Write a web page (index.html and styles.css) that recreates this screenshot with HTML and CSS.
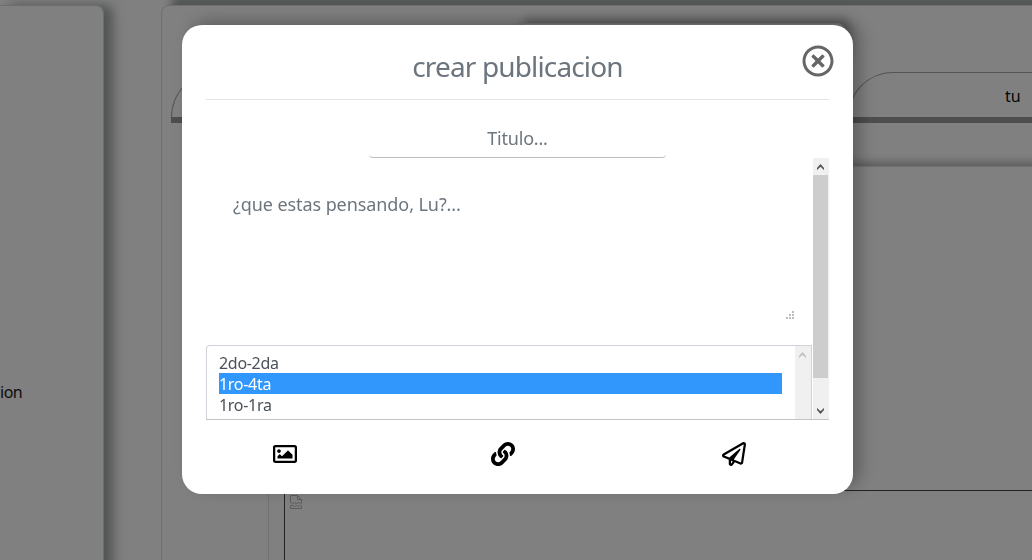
FILE: index.html
```
<!DOCTYPE html>
<html lang="es">
<head>
<meta charset="utf-8">
<title>crear publicacion</title>
<link rel="stylesheet" href="styles.css">
</head>
<body>
<div class="page">
  <aside class="side"><span class="side-label">ion</span></aside>
  <main class="main">
    <div class="banner"></div>
    <nav class="tabs">
      <div class="tab"></div>
      <div class="tab tab-tu">tu</div>
    </nav>
    <section class="post">
      <div class="post-media">
        <svg class="broken" viewBox="0 0 12 14" fill="none" stroke="#5c5c5c"><path d="M.5 7V.5h7l4 4V8M7.500 .5v4h4M.5 7l2 2 2-2 2 2 2-2 2 2 1-1M.5 10.500v3h11V11l-1-1-2 2-2-2-2 2-2-2-2 1"/></svg>
      </div>
    </section>
  </main>
</div>
<div class="overlay">
  <div class="modal" role="dialog">
    <header class="modal-header">
      <h2 class="modal-title">crear publicacion</h2>
      <svg class="close" viewBox="0 0 512 512"><path d="M256 8C119 8 8 119 8 256s111 248 248 248 248-111 248-248S393 8 256 8zm0 448c-110.500 0-200-89.500-200-200S145.500 56 256 56s200 89.500 200 200-89.500 200-200 200zm101.800-262.200L295.600 256l62.200 62.200c4.700 4.700 4.700 12.300 0 17l-22.600 22.600c-4.700 4.700-12.300 4.700-17 0L256 295.600l-62.200 62.200c-4.700 4.700-12.300 4.700-17 0l-22.600-22.600c-4.700-4.700-4.700-12.300 0-17l62.200-62.200-62.200-62.200c-4.700-4.700-4.700-12.300 0-17l22.600-22.600c4.700-4.700 12.300-4.700 17 0l62.200 62.200 62.200-62.200c4.700-4.700 12.300-4.700 17 0l22.600 22.600c4.700 4.700 4.700 12.300 0 17z"/></svg>
    </header>
    <div class="title-field">Titulo...</div>
    <div class="scroll-area">
      <div class="fields">
        <div class="message">
          <span class="message-text">¿que estas pensando, Lu?...</span>
          <svg class="grip" viewBox="0 0 8 8" fill="#bdbdbd" shape-rendering="crispEdges"><path d="M6 0h2v2H6zM3 3h2v2H3zM6 3h2v2H6zM0 6h2v2H0zM3 6h2v2H3zM6 6h2v2H6z"/></svg>
        </div>
        <div class="select">
          <div class="options">
            <div class="option">2do-2da</div>
            <div class="option selected">1ro-4ta</div>
            <div class="option">1ro-1ra</div>
          </div>
          <div class="select-bar"><svg class="arrow faint" viewBox="0 0 7 6"><path d="M0 4L3.500 0 7 4V6L3.500 2.700 0 6z"/></svg></div>
        </div>
      </div>
      <div class="bar">
        <svg class="arrow" viewBox="0 0 7 6"><path d="M0 4L3.500 0 7 4V6L3.500 2.700 0 6z"/></svg>
        <div class="thumb"></div>
        <svg class="arrow down" viewBox="0 0 7 6"><path d="M0 2L3.500 6 7 2V0L3.500 3.300 0 0z"/></svg>
      </div>
    </div>
    <footer class="actions">
      <svg class="icon" viewBox="0 0 512 512"><path d="M464 64H48C21.490 64 0 85.490 0 112v288c0 26.510 21.490 48 48 48h416c26.510 0 48-21.490 48-48V112c0-26.510-21.490-48-48-48zm-6 336H54a6 6 0 0 1-6-6V118a6 6 0 0 1 6-6h404a6 6 0 0 1 6 6v276a6 6 0 0 1-6 6zM128 152c-22.091 0-40 17.909-40 40s17.909 40 40 40 40-17.909 40-40-17.909-40-40-40zM96 352h320v-80l-87.515-87.515c-4.686-4.686-12.284-4.686-16.971 0L192 304l-39.515-39.515c-4.686-4.686-12.284-4.686-16.971 0L96 304v48z"/></svg>
      <svg class="icon icon-link" viewBox="0 0 512 512"><path d="M326.612 185.391c59.747 59.809 58.927 155.698.36 214.590-.11.12-.24.25-.36.37l-67.200 67.200c-59.270 59.270-155.699 59.262-214.960 0-59.270-59.260-59.270-155.700 0-214.960l37.106-37.106c9.840-9.840 26.786-3.300 27.294 10.606.648 17.722 3.826 35.527 9.690 52.721 1.986 5.822.567 12.262-3.783 16.612l-13.087 13.087c-28.026 28.026-28.905 73.660-1.155 101.960 28.024 28.579 74.086 28.749 102.325.51l67.200-67.190c28.191-28.191 28.073-73.757 0-101.830-3.701-3.694-7.429-6.564-10.341-8.569a16.037 16.037 0 0 1-6.947-12.606c-.396-10.567 3.348-21.456 11.698-29.806l21.054-21.055c5.521-5.521 14.182-6.199 20.584-1.731a152.482 152.482 0 0 1 20.522 17.197zM467.547 44.449c-59.261-59.262-155.690-59.270-214.960 0l-67.200 67.200c-.12.12-.25.25-.36.37-58.566 58.892-59.387 154.781.36 214.590a152.454 152.454 0 0 0 20.521 17.196c6.402 4.468 15.064 3.789 20.584-1.731l21.054-21.055c8.350-8.350 12.094-19.239 11.698-29.806a16.037 16.037 0 0 0-6.947-12.606c-2.912-2.005-6.640-4.875-10.341-8.569-28.073-28.073-28.191-73.639 0-101.830l67.200-67.190c28.239-28.239 74.300-28.069 102.325.51 27.750 28.300 26.872 73.934-1.155 101.960l-13.087 13.087c-4.350 4.350-5.769 10.790-3.783 16.612 5.864 17.194 9.042 34.999 9.690 52.721.509 13.906 17.454 20.446 27.294 10.606l37.106-37.106c59.271-59.259 59.271-155.699.001-214.959z"/></svg>
      <svg class="icon" viewBox="0 0 512 512"><path d="M440 6.500L24 246.400c-34.400 19.900-31.100 70.800 5.700 85.900L144 379.600V464c0 46.400 59.200 65.500 86.600 28.600l43.800-59.100 111.900 46.200c5.900 2.400 12.100 3.600 18.300 3.600 8.200 0 16.300-2.100 23.600-6.200 12.800-7.200 21.600-20 23.900-34.500l59.400-387.200c6.100-40.100-36.900-68.800-71.500-48.900zM192 464v-64.600l36.600 15.100L192 464zm212.600-28.700l-153.800-63.500L391 169.500c10.700-15.500-9.500-33.500-23.700-21.200L155.800 332.600 48 288 464 48l-59.400 387.300z"/></svg>
    </footer>
  </div>
</div>
</body>
</html>
```
FILE: styles.css
```
* { box-sizing: border-box; }
body {
  margin: 0;
  background: #808080;
  font-family: "Noto Sans", "Open Sans", sans-serif;
  font-size: 16px;
  overflow: hidden;
}
svg { display: block; flex: none; }

.page {
  display: flex;
  gap: 57px;
  height: 560px;
  padding-top: 5px;
  overflow: hidden;
}
.side {
  flex: none;
  width: 104px;
  height: 640px;
  border: 1px solid #6e6e6e;
  border-left: 0;
  border-radius: 0 8px 0 0;
  background: #808080;
  box-shadow: 9px 0 12px #505452;
  color: #0c0c0c;
  padding-top: 374px;
}
.side-label { display: block; line-height: 24px; letter-spacing: -.5px; }
.main {
  flex: none;
  width: 900px;
  height: 640px;
  border: 1px solid #6e6e6e;
  border-radius: 8px 0 0 0;
  background: #808080;
  box-shadow: 10px -10px 8px #525654;
  padding: 17px 0 0 9px;
}
.banner {
  width: 328px;
  height: 40px;
  margin-left: 346px;
  border: 1px solid #747474;
  border-radius: 8px;
  box-shadow: 5px -4px 8px #5c5c5c;
}
.tabs { display: flex; margin-top: 9px; border-bottom: 6px solid #4d4d4d; }
.tab {
  flex: none;
  width: 677px;
  height: 45px;
  border: 1px solid #555;
  border-bottom: 0;
  border-radius: 45px 45px 0 0;
}
.tab-tu {
  width: 330px;
  padding-left: 156px;
  line-height: 47px;
  color: #050505;
}
.post {
  width: 900px;
  height: 500px;
  margin: 43px 0 0 97px;
  padding: 323px 0 0 15px;
  border: 1px solid #717171;
  box-shadow: 10px -4px 8px #5c5c5c;
}
.post-media {
  height: 120px;
  padding: 4px 5px;
  border: 1px solid #222;
}
.broken { width: 12px; height: 14px; }

.overlay {
  position: fixed;
  inset: 0;
  padding: 25px 0 0 182px;
}
.modal {
  display: flex;
  flex-direction: column;
  width: 671px;
  height: 469px;
  padding: 0 24px;
  border-radius: 20px;
  background: #fff;
  box-shadow: 8px -5px 15px rgba(0, 0, 0, .25);
}
.modal-header {
  display: grid;
  grid-template-columns: 32px 1fr 32px;
  flex: none;
  height: 75px;
  padding-top: 20px;
  border-bottom: 1px solid #e3e3e3;
}
.modal-title {
  grid-column: 2;
  margin: 0;
  text-align: center;
  color: #6c757d;
  font-size: 28px;
  font-weight: 400;
  line-height: 42px;
  letter-spacing: -.85px;
}
.close { width: 32px; height: 32px; fill: #666; margin-left: 4.500px; }
.title-field {
  align-self: center;
  flex: none;
  width: 297px;
  height: 38px;
  margin: 20px 0 0 0;
  border-bottom: 1px solid #bcbcbc;
  border-radius: 4px;
  color: #6c757d;
  font-size: 18px;
  line-height: 37px;
  letter-spacing: -.2px;
  text-align: center;
}
.scroll-area {
  display: flex;
  flex: none;
  height: 262px;
  border-bottom: 1px solid #c2c4c8;
}
.fields { width: 606px; margin-right: 1px; }
.message {
  display: flex;
  flex-direction: column;
  justify-content: space-between;
  height: 187px;
  padding: 33px 18px 26px 27px;
}
.message-text {
  color: #6c757d;
  font-size: 18px;
  line-height: 26px;
  letter-spacing: -.08px;
}
.grip { width: 8px; height: 8px; align-self: flex-end; }
.select {
  display: flex;
  height: 74px;
  border: 1px solid #ced4da;
  border-bottom: 0;
  border-radius: 4px 0 0 0;
}
.options { flex: 1; padding: 6px 13px 0 12px; }
.option {
  height: 21px;
  color: #495057;
  line-height: 22px;
  letter-spacing: -.3px;
}
.selected { background: #3297fd; color: #fff; }
.select-bar { width: 16px; background: #f0f0f0; padding: 6px 0 0 4px; }
.arrow { width: 7px; height: 6px; fill: #505050; margin-left: 4px; }
.select-bar .arrow { margin-left: 0; }
.faint { fill: #bfbfbf; }
.bar { width: 16px; background: #f0f0f0; padding-top: 6px; }
.thumb { width: 15px; height: 203px; margin-top: 5px; background: #cdcdcd; }
.down { margin-top: 30px; }
.actions {
  display: flex;
  padding: 22px 83px 0 67px;
}
.icon { width: 24px; height: 24px; }
.icon-link { margin: 0 207px 0 194px; }
```
